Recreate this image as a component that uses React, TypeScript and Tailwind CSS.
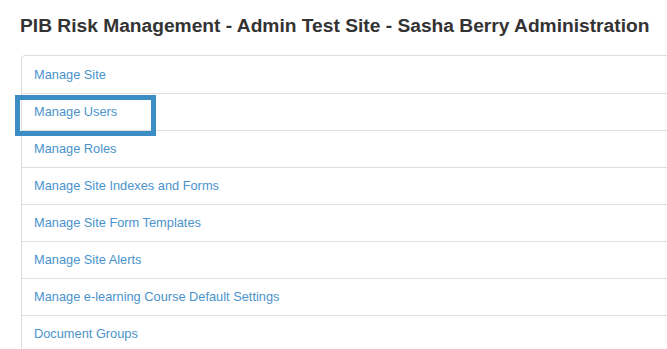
import React from "react";

const items = [
  "Manage Site",
  "Manage Users",
  "Manage Roles",
  "Manage Site Indexes and Forms",
  "Manage Site Form Templates",
  "Manage Site Alerts",
  "Manage e-learning Course Default Settings",
  "Document Groups",
];

export default function App() {
  return (
    <div
      className="relative w-[667px] h-[349px] overflow-hidden bg-white"
      style={{ fontFamily: '"Liberation Sans", Arial, sans-serif' }}
    >
      <h1 className="pl-[20px] pt-[15px] text-[19.2px] leading-[22px] font-bold text-[#333333]">
        PIB Risk Management - Admin Test Site - Sasha Berry Administration
      </h1>
      <div className="ml-[21px] mt-[18px] w-[700px] border border-[#dddddd] rounded-tl-[4px]">
        {items.map((t, i) => (
          <div
            key={t}
            className={`h-[37px] flex items-center pl-[12px] text-[12.8px] text-[#4a93cc] ${
              i > 0 ? "border-t border-[#dddddd]" : ""
            }`}
          >
            {t}
          </div>
        ))}
      </div>
      <div className="absolute left-[15px] top-[95px] w-[141px] h-[41px] border-[5px] border-[#3b8dc4]" />
    </div>
  );
}
